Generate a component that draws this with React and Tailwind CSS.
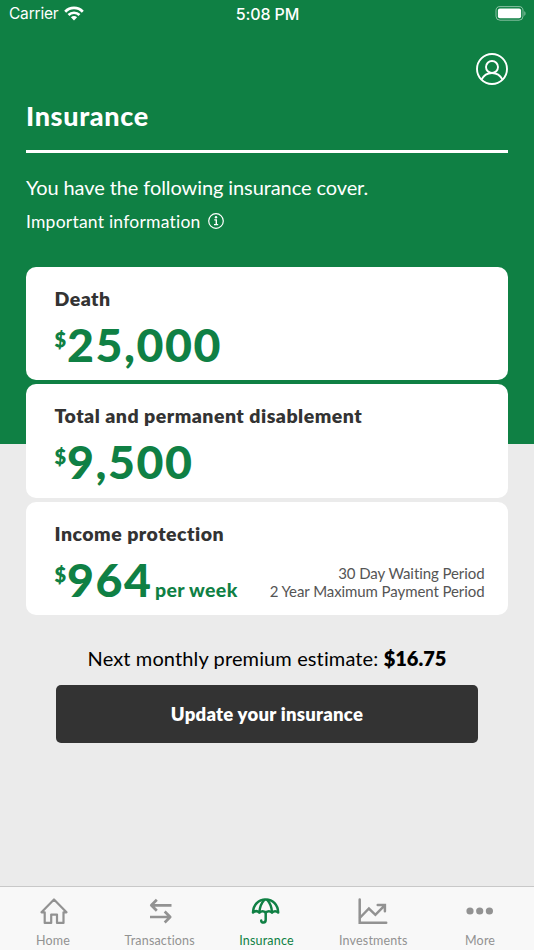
const covers = [
  { title: 'Death', amount: '25,000' },
  { title: 'Total and permanent disablement', amount: '9,500' },
  {
    title: 'Income protection',
    amount: '964',
    suffix: 'per week',
    notes: ['30 Day Waiting Period', '2 Year Maximum Payment Period'],
  },
];

const HomeIcon = () => (
  <svg className="w-8 h-8" viewBox="0 0 32 32" fill="none" stroke="currentColor" strokeWidth="2.2" strokeLinejoin="round" strokeLinecap="round">
    <path d="M4.500 17.300 17 4.500 29.500 17.300H26.500v10.600h-6.500v-8.300h-5.800v8.300H7.700V17.300z" />
  </svg>
);

const TransferIcon = () => (
  <svg className="w-8 h-8" viewBox="0 0 32 32" fill="none" stroke="currentColor" strokeWidth="2.7" strokeLinejoin="round">
    <path d="M27.500 10.300H7.300M12.800 4.800l-5.500 5.500 5.500 5.500" />
    <path d="M6 22h20.200M20.700 16.500l5.500 5.500-5.500 5.500" />
  </svg>
);

const UmbrellaIcon = () => (
  <svg className="w-8 h-8" viewBox="0 0 32 32" fill="none" stroke="currentColor" strokeWidth="2.5" strokeLinejoin="round" strokeLinecap="round">
    <path d="M3 17.500C3.200 9.800 8.500 4.500 15.700 4.500s12.300 5.300 12.500 13c-1.900-1.600-4.300-1.600-6.200 0-1.900-1.600-4.400-1.600-6.300 0-1.900-1.600-4.400-1.600-6.300 0-1.900-1.600-4.500-1.600-6.400 0z" />
    <path d="M9.400 17.200C9.700 12 11.500 8 14.200 5M22 17.200C21.700 12 20 8 17.300 5" />
    <path d="M15.700 17v7.800c0 3.600-4.300 3.600-4.500.8" />
  </svg>
);

const ChartIcon = () => (
  <svg className="w-8 h-8" viewBox="0 0 32 32" fill="none" stroke="currentColor" strokeWidth="2.5" strokeLinecap="round">
    <path d="M2.700 4.500v23.200h26.500" />
    <path d="M3.200 22.500l8.700-9 6.500 6.300 9.300-9.500M20.700 10h7.200v6.300" />
  </svg>
);

const MoreIcon = () => (
  <svg className="w-8 h-8" viewBox="0 0 32 32" fill="currentColor">
    <circle cx="6" cy="16" r="3.600" />
    <circle cx="15.700" cy="16" r="3.600" />
    <circle cx="25.400" cy="16" r="3.600" />
  </svg>
);

const tabs = [
  { label: 'Home', icon: HomeIcon },
  { label: 'Transactions', icon: TransferIcon },
  { label: 'Insurance', icon: UmbrellaIcon, active: true },
  { label: 'Investments', icon: ChartIcon },
  { label: 'More', icon: MoreIcon },
];

const StatusBar = () => (
  <div className="h-7 grid grid-cols-3 items-center pl-[9px] pr-2 font-['Inter',sans-serif] text-base leading-7">
    <div className="flex items-center gap-[6px]">
      <span className="text-[15.500px] tracking-[-0.2px]">Carrier</span>
      <svg className="w-5 h-[15px] -mt-[2px]" viewBox="0 0 20 15" fill="none" stroke="currentColor" strokeWidth="2.700">
        <path d="M1.200 5.700C6 .7 14 .7 18.800 5.700" />
        <path d="M4.500 9c3-3 8-3 11 0" />
        <path d="M10 14.500 6.900 11.300c1.700-1.700 4.500-1.700 6.200 0z" fill="currentColor" stroke="none" />
      </svg>
    </div>
    <span className="text-center font-medium whitespace-nowrap -mt-px tracking-[-0.1px]">5:08 PM</span>
    <svg className="w-[31px] h-[15px] justify-self-end -mt-[2px]" viewBox="0 0 31 15">
      <rect x="1" y=".6" width="27" height="13.600" rx="4" fill="none" stroke="white" strokeOpacity=".5" />
      <rect x="2.900" y="2.500" width="23.200" height="9.800" rx="2" fill="white" />
      <path d="M29.300 5.200c1.600.6 1.600 3.900 0 4.500z" fill="white" fillOpacity=".5" />
    </svg>
  </div>
);

const CoverCard = ({ title, amount, suffix, notes }) => (
  <section className="h-[113.500px] bg-white rounded-[10px] pl-[28.500px] pr-[23.500px] pt-5 flex flex-col">
    <h2 className="text-[19.500px] leading-6 font-extrabold text-[#333333] tracking-[0.480px]">{title}</h2>
    <div className="flex justify-between mt-[5px] text-[#0f8044]">
      <div className="flex items-baseline h-14 whitespace-nowrap font-black">
        <span className="text-[20px] leading-none relative -top-[15px] w-[12.500px] font-extrabold">$</span>
        <span className="text-[46.500px] leading-14 tracking-[1.500px]">{amount}</span>
        {suffix && <span className="text-[19.500px] ml-[2.500px] tracking-[0.350px]">{suffix}</span>}
      </div>
      {notes && (
        <div className="text-right text-[15px] leading-[18px] text-[#555555] pt-[13px] whitespace-nowrap tracking-[-0.080px]">
          {notes.map((note) => (
            <p key={note}>{note}</p>
          ))}
        </div>
      )}
    </div>
  </section>
);

export default function App() {
  return (
    <div className="w-full h-[950px] flex flex-col overflow-hidden font-['Lato',sans-serif] [font-variant-ligatures:none] bg-[linear-gradient(to_bottom,#0f8044_443.500px,#ebebeb_443.500px)]">
      <header className="text-white">
        <StatusBar />
        <div className="px-[26px]">
          <div className="flex justify-end pt-[25px]">
            <svg className="w-8 h-8" viewBox="0 0 32 32" fill="none" stroke="currentColor" strokeWidth="1.900">
              <circle cx="16" cy="16" r="15" />
              <circle cx="16" cy="14" r="6" />
              <path d="M5.500 26.700c2.200-4.400 6-6.700 10.500-6.700s8.300 2.300 10.500 6.700" />
            </svg>
          </div>
          <h1 className="mt-[13px] text-[27px] leading-9 font-black tracking-[0.650px]">Insurance</h1>
          <div className="mt-4 h-[3px] bg-white" />
          <p className="mt-[20px] text-[20px] leading-7 tracking-[-0.090px]">You have the following insurance cover.</p>
          <div className="mt-[9px] flex items-center gap-[7px]">
            <span className="text-[17.500px] leading-6 tracking-[0.230px]">Important information</span>
            <svg className="w-4 h-4 -mt-[2px]" viewBox="0 0 16 16" fill="none" stroke="currentColor">
              <circle cx="8" cy="8" r="7.300" strokeWidth="1.200" />
              <path d="M6.300 6.900h2v4.500M6 11.600h4.200" strokeWidth="1.400" />
              <circle cx="8" cy="4.300" r="1.200" fill="currentColor" stroke="none" />
            </svg>
          </div>
        </div>
      </header>

      <main className="flex-1 px-[26px] mt-[32.500px]">
        <div className="flex flex-col gap-1">
          {covers.map((cover) => (
            <CoverCard key={cover.title} {...cover} />
          ))}
        </div>
        <p className="mt-[29px] text-center text-[20px] leading-7 text-black whitespace-nowrap tracking-[0.120px]">
          Next monthly premium estimate: <span className="font-extrabold tracking-normal">$16.75</span>
        </p>
        <button className="block mx-auto mt-[13px] pt-px w-[422px] h-[58px] rounded-[5px] bg-[#333333] text-white text-[18.500px] font-extrabold tracking-[0.250px]">
          Update your insurance
        </button>
      </main>

      <nav className="h-16 shrink-0 grid grid-cols-5 bg-[#f8f8f8] border-t border-[#c8c8c8]">
        {tabs.map(({ label, icon: Icon, active }) => (
          <a
            key={label}
            className={`flex flex-col items-center pt-2 pr-px ${active ? 'text-[#0f8044]' : 'text-[#929292]'}`}
          >
            <Icon />
            <span className="mt-[6px] text-[12.500px] leading-4 tracking-[0.180px]">{label}</span>
          </a>
        ))}
      </nav>
    </div>
  );
}
